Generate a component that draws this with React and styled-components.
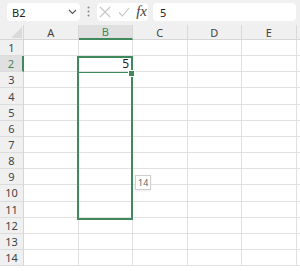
import React from "react";
import styled, { createGlobalStyle } from "styled-components";

const GREEN = "#40895d";
const LINE = "#e1e1e1";

const Global = createGlobalStyle`
  html, body { margin: 0; padding: 0; background: #fff; }
  body { font-family: "Noto Sans", "Open Sans", sans-serif; }
`;

const Page = styled.div`
  width: 300px;
  height: 271px;
  overflow: hidden;
  background: #fff;
`;

const Toolbar = styled.div`
  height: 25px;
  box-sizing: border-box;
  background: #f0f0f0;
  display: flex;
  align-items: flex-start;
  padding: 3px 4px 0 7px;
`;

const Box = styled.div`
  height: 18px;
  background: #fff;
  border-radius: 4px;
  display: flex;
  align-items: center;
  box-sizing: border-box;
  width: ${(p) => p.w}px;
  flex: ${(p) => (p.grow ? 1 : "none")};
  padding: 0 ${(p) => p.pad || 0}px;
  font-size: 11px;
  color: #222;
`;

const NameText = styled.span`
  flex: 1;
  padding-left: 2px;
`;

const Dots = styled.div`
  width: 17px;
  display: flex;
  justify-content: center;
  padding-top: 3px;
`;

const FxButtons = styled(Box)`
  justify-content: space-between;
  margin-right: 5px;
  padding-left: 2px;
  padding-right: 1px;
`;

const FxLabel = styled.span`
  font-family: "Liberation Serif", serif;
  font-style: italic;
  font-size: 15px;
  color: #444;
  line-height: 1;
  margin-top: -2px;
`;

const Grid = styled.div`
  position: relative;
  display: grid;
  grid-template-columns: 24px repeat(6, 54.5px);
  grid-template-rows: 15px repeat(14, 16.17px);
`;

const Corner = styled.div`
  background: #f0f0f0;
  border-right: 1px solid #d6d6d6;
  border-bottom: 1px solid #d6d6d6;
  position: relative;
  &::after {
    content: "";
    position: absolute;
    right: 1px;
    bottom: 1px;
    width: 0;
    height: 0;
    border-left: 11px solid transparent;
    border-bottom: 11px solid #dadada;
  }
`;

const ColHead = styled.div`
  background: ${(p) => (p.active ? "#e0e0e0" : "#f0f0f0")};
  color: ${(p) => (p.active ? GREEN : "#444")};
  border-right: 1px solid #d9d9d9;
  border-bottom: ${(p) => (p.active ? `2px solid ${GREEN}` : "1px solid #d6d6d6")};
  font-size: 11px;
  display: flex;
  align-items: center;
  justify-content: center;
  box-sizing: border-box;
`;

const RowHead = styled.div`
  background: ${(p) => (p.active ? "#e0e0e0" : "#f0f0f0")};
  color: ${(p) => (p.active ? GREEN : "#444")};
  border-right: ${(p) => (p.active ? `2px solid ${GREEN}` : "1px solid #d6d6d6")};
  border-bottom: 1px solid #dcdcdc;
  font-size: 11px;
  display: flex;
  align-items: center;
  justify-content: center;
  box-sizing: border-box;
`;

const Cell = styled.div`
  border-right: 1px solid ${LINE};
  border-bottom: 1px solid ${LINE};
  box-sizing: border-box;
  font-size: 12px;
  color: #222;
  display: flex;
  align-items: center;
  justify-content: flex-end;
  padding-right: 3px;
`;

const Selection = styled.div`
  position: absolute;
  left: 77px;
  top: 31px;
  width: 56px;
  height: 164px;
  border: 2px solid ${GREEN};
  box-sizing: border-box;
  pointer-events: none;
`;

const ActiveLine = styled.div`
  position: absolute;
  left: 0;
  right: 0;
  top: 14px;
  height: 1px;
  background: ${GREEN};
`;

const Handle = styled.div`
  position: absolute;
  right: -4px;
  top: 12px;
  width: 5px;
  height: 5px;
  background: ${GREEN};
  border: 1px solid #fff;
`;

const Tip = styled.div`
  position: absolute;
  left: 135px;
  top: 150px;
  height: 13px;
  padding: 0 2px;
  background: #fff;
  border: 1px solid #cfcfcf;
  font-size: 9px;
  color: #666;
  display: flex;
  align-items: center;
  box-shadow: 0 1px 2px rgba(0, 0, 0, 0.08);
`;

const cols = ["A", "B", "C", "D", "E", ""];
const rows = Array.from({ length: 14 }, (_, i) => i + 1);

const App = () => {
  return (
    <Page>
      <Global />
      <Toolbar>
        <Box w={73} pad={3}>
          <NameText>B2</NameText>
          <svg width="9" height="6" viewBox="0 0 9 6">
            <path d="M1 1l3.5 3.5L8 1" fill="none" stroke="#555" strokeWidth="1.1" />
          </svg>
        </Box>
        <Dots>
          <svg width="3" height="11" viewBox="0 0 3 11">
            <circle cx="1.5" cy="1.5" r="1" fill="#888" />
            <circle cx="1.5" cy="5.5" r="1" fill="#888" />
            <circle cx="1.5" cy="9.5" r="1" fill="#888" />
          </svg>
        </Dots>
        <FxButtons w={51}>
          <svg width="12" height="12" viewBox="0 0 12 12">
            <path d="M1 1l10 10M11 1l-10 10" stroke="#c4c4c4" strokeWidth="1.1" />
          </svg>
          <svg width="12" height="10" viewBox="0 0 12 10">
            <path d="M1 5.5l3.5 3.5L11 1" fill="none" stroke="#c4c4c4" strokeWidth="1.1" />
          </svg>
          <FxLabel>fx</FxLabel>
        </FxButtons>
        <Box grow pad={7}>5</Box>
      </Toolbar>
      <Grid>
        <Corner />
        {cols.map((c, i) => (
          <ColHead key={i} active={c === "B"}>{c}</ColHead>
        ))}
        {rows.map((r) => (
          <React.Fragment key={r}>
            <RowHead active={r === 2}>{r}</RowHead>
            {cols.map((c, i) => (
              <Cell key={i}>{r === 2 && c === "B" ? "5" : ""}</Cell>
            ))}
          </React.Fragment>
        ))}
        <Selection>
          <ActiveLine />
          <Handle />
        </Selection>
        <Tip>14</Tip>
      </Grid>
    </Page>
  );
};

export default App;
